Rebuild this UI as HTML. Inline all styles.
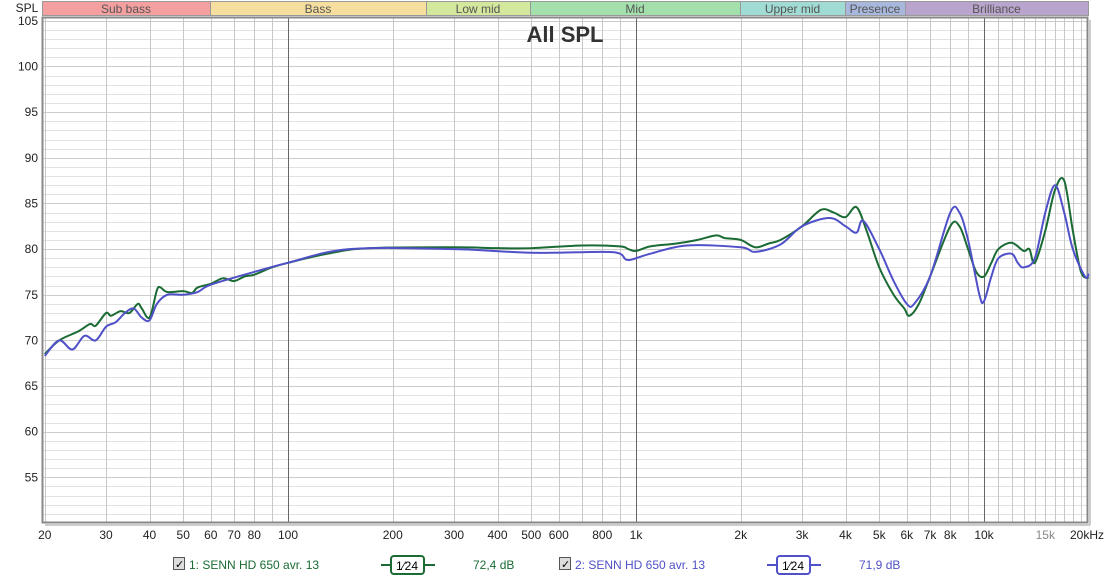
<!DOCTYPE html>
<html><head><meta charset="utf-8"><style>
body{margin:0;width:1110px;height:579px;background:#fff;overflow:hidden;font-family:"Liberation Sans",sans-serif}
svg{position:absolute;left:0;top:0}
</style></head><body>
<svg id="s" width="1110" height="579" xmlns="http://www.w3.org/2000/svg" font-family="Liberation Sans, sans-serif"></svg>
<script>
const s=document.getElementById('s');
const L=42,R=1088,T=17,B=523;
const X=f=>288+348*Math.log10(f/100);
const Y=d=>523-(d-50)*9.13;
let h='';
const bands=[[42,210,'#f4a0a0','Sub bass'],[210,426,'#f6df9e','Bass'],[426,530,'#d3e89c','Low mid'],[530,740,'#a3e0ac','Mid'],[740,845,'#a0dcd4','Upper mid'],[845,905,'#a8b8dc','Presence'],[905,1088,'#b8a4cc','Brilliance']];
for(const b of bands){h+=`<rect x="${b[0]+.5}" y="1.5" width="${b[1]-b[0]}" height="14" fill="${b[2]}" stroke="#999"/>`;
h+=`<text x="${(b[0]+b[1])/2}" y="13" font-size="12" text-anchor="middle" fill="#555">${b[3]}</text>`;}
h+=`<rect x="${L}" y="${T}" width="${R-L}" height="${B-T}" fill="#fff"/>`;
for(let d=51;d<=105;d++){const y=Math.round(Y(d))+.5;h+=`<line x1="${L}" x2="${R}" y1="${y}" y2="${y}" stroke="${d%5?'#e2e2e2':'#cccccc'}"/>`;}
let fs=[];for(let dec of [10,100,1000])for(let m=1;m<10;m++)fs.push(m*dec);for(let k=10000;k<=20000;k+=1000)fs.push(k);
for(const f of fs){if(f<20)continue;const x=Math.round(X(f))+.5;if(x>R)continue;const major=(f==100||f==1000||f==10000);h+=`<line x1="${x}" x2="${x}" y1="${T}" y2="${B}" stroke="${major?'#666':'#c8c8c8'}"/>`;}
h+=`<rect x="${L+.5}" y="${T+.5}" width="${R-L-1}" height="${B-T-1}" fill="none" stroke="#888" stroke-width="2"/>`;
h+=`<line x1="${R+2}" x2="${R+2}" y1="${T+3}" y2="${B+2}" stroke="#ccc" stroke-width="2"/><line x1="${L+3}" x2="${R+2}" y1="${B+2}" y2="${B+2}" stroke="#ccc" stroke-width="2"/>`;
h+=`<text x="27" y="12" font-size="12" text-anchor="middle" fill="#222">SPL</text>`;
for(let d=55;d<=105;d+=5)h+=`<text x="38" y="${Y(d)+4}" font-size="12" text-anchor="end" fill="#222">${d}</text>`;
const xl=[[20,'20'],[30,'30'],[40,'40'],[50,'50'],[60,'60'],[70,'70'],[80,'80'],[100,'100'],[200,'200'],[300,'300'],[400,'400'],[500,'500'],[600,'600'],[800,'800'],[1000,'1k'],[2000,'2k'],[3000,'3k'],[4000,'4k'],[5000,'5k'],[6000,'6k'],[7000,'7k'],[8000,'8k'],[10000,'10k'],[15000,'15k']];
for(const [f,t] of xl)h+=`<text x="${X(f)}" y="539" font-size="12" text-anchor="middle" fill="${f==15000?'#888':'#222'}">${t}</text>`;
h+=`<text x="1087" y="539" font-size="12" text-anchor="middle" fill="#222">20kHz</text>`;
h+=`<text x="565" y="42" font-size="22" font-weight="bold" text-anchor="middle" fill="#333">All SPL</text>`;
function curve(pts,col){const P=pts.map(p=>[X(p[0]),Y(p[1])]);let d=`M${P[0][0]},${P[0][1]}`;
for(let i=0;i<P.length-1;i++){const p0=P[i-1]||P[i],p1=P[i],p2=P[i+1],p3=P[i+2]||p2;
d+=` C${p1[0]+(p2[0]-p0[0])/6},${p1[1]+(p2[1]-p0[1])/6} ${p2[0]-(p3[0]-p1[0])/6},${p2[1]-(p3[1]-p1[1])/6} ${p2[0]},${p2[1]}`;}
return `<path d="${d}" fill="none" stroke="${col}" stroke-width="2"/>`;}
const g=[[20,68.5],[22,70],[25,71],[27,71.8],[28,71.6],[30,73],[31,72.7],[33,73.2],[35,73],[37,74],[38,73.5],[40,72.5],[42,75.5],[43,75.8],[45,75.3],[50,75.4],[53,75.2],[55,75.8],[60,76.2],[65,76.8],[70,76.5],[75,77],[80,77.2],[90,78],[100,78.5],[130,79.5],[170,80.1],[300,80.2],[400,80.1],[500,80.1],[700,80.4],[900,80.3],[950,80],[1000,79.8],[1100,80.3],[1300,80.6],[1500,81],[1700,81.5],[1800,81.2],[2000,81],[2200,80.2],[2400,80.6],[2600,81],[3000,82.5],[3400,84.3],[3700,84],[4000,83.5],[4300,84.6],[4600,82],[5000,78],[5500,75],[5900,73.5],[6100,72.7],[6500,74],[7000,77],[8000,82.5],[8500,82.5],[9000,80],[9500,77.5],[10000,77],[10500,78.5],[11000,80],[12000,80.7],[13000,79.8],[13500,80],[14000,78.5],[15000,82],[16000,86.5],[17000,87.5],[18000,82],[19000,77.5],[20000,76.8]];
const b=[[20,68.3],[22,70],[24,69],[26,70.5],[28,70],[30,71.5],[32,72],[34,73],[36,73.5],[38,72.5],[40,72.2],[42,74],[45,75],[50,75],[55,75.3],[60,76.1],[80,77.5],[100,78.5],[150,80],[300,80],[500,79.6],[800,79.7],[900,79.5],[950,78.8],[1100,79.5],[1400,80.4],[2000,80.2],[2200,79.7],[2600,80.5],[3000,82.5],[3600,83.4],[4000,82.5],[4300,81.8],[4500,83.1],[5000,80],[5500,76.5],[6000,74],[6300,74],[7000,77],[8000,84],[8500,84],[9000,81],[9700,75],[10000,74.3],[10500,77],[11000,79],[12000,79.5],[12500,78.5],[13000,78],[14000,79],[15000,84],[16000,87],[17000,84],[18000,80],[19500,77],[20000,77.3]];
h+=curve(g,'#1a6b34')+curve(b,'#5050c8');
function leg(x,col,name,val){let r='';
r+=`<rect x="${x}.5" y="557.5" width="11" height="12" fill="#ddd" stroke="#555"/><text x="${x+2}" y="568" font-size="11" fill="#000">✓</text>`;
r+=`<text x="${x+16}" y="569" font-size="12" fill="${col}">${name}</text>`;
const lx=x+208;r+=`<line x1="${lx}" x2="${lx+54}" y1="565" y2="565" stroke="${col}" stroke-width="2"/><rect x="${lx+10}" y="556" width="33" height="18" rx="3" fill="#fff" stroke="${col}" stroke-width="2"/>`;
r+=`<text x="${lx+26}" y="570" font-size="12" text-anchor="middle" fill="#000">1⁄24</text>`;
r+=`<text x="${x+300}" y="569" font-size="12" fill="${col}">${val}</text>`;return r;}
h+=leg(173,'#1a6b34','1: SENN HD 650 avr. 13','72,4 dB');
h+=leg(559,'#5050c8','2: SENN HD 650 avr. 13','71,9 dB');
s.innerHTML=h;
</script>
</body></html>
